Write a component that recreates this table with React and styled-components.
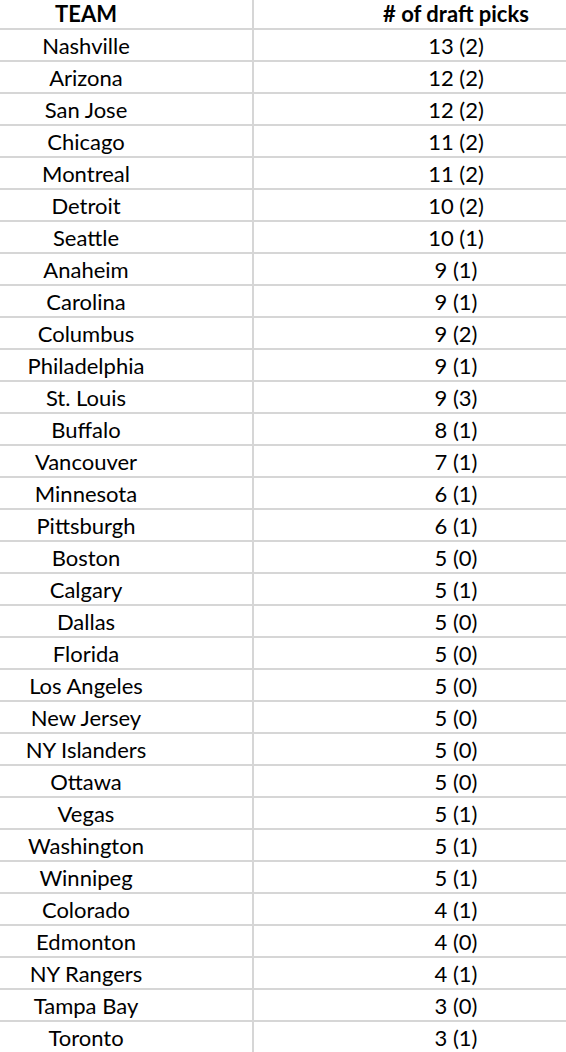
import React from 'react';
import styled, { createGlobalStyle } from 'styled-components';

const rows = [
  ['Nashville', '13 (2)'],
  ['Arizona', '12 (2)'],
  ['San Jose', '12 (2)'],
  ['Chicago', '11 (2)'],
  ['Montreal', '11 (2)'],
  ['Detroit', '10 (2)'],
  ['Seattle', '10 (1)'],
  ['Anaheim', '9 (1)'],
  ['Carolina', '9 (1)'],
  ['Columbus', '9 (2)'],
  ['Philadelphia', '9 (1)'],
  ['St. Louis', '9 (3)'],
  ['Buffalo', '8 (1)'],
  ['Vancouver', '7 (1)'],
  ['Minnesota', '6 (1)'],
  ['Pittsburgh', '6 (1)'],
  ['Boston', '5 (0)'],
  ['Calgary', '5 (1)'],
  ['Dallas', '5 (0)'],
  ['Florida', '5 (0)'],
  ['Los Angeles', '5 (0)'],
  ['New Jersey', '5 (0)'],
  ['NY Islanders', '5 (0)'],
  ['Ottawa', '5 (0)'],
  ['Vegas', '5 (1)'],
  ['Washington', '5 (1)'],
  ['Winnipeg', '5 (1)'],
  ['Colorado', '4 (1)'],
  ['Edmonton', '4 (0)'],
  ['NY Rangers', '4 (1)'],
  ['Tampa Bay', '3 (0)'],
  ['Toronto', '3 (1)'],
];

const GlobalStyle = createGlobalStyle`
  body {
    margin: 0;
    background: #fff;
    font-family: Lato, "Open Sans", sans-serif;
    color: #000;
  }
`;

// gap + gray background draws the sheet grid lines
const Sheet = styled.div`
  display: grid;
  grid-template-columns: 252px 312px;
  grid-template-rows: 28px;
  grid-auto-rows: 30px;
  gap: 2px;
  background: #d6d6d6;
  width: 566px;
  height: 1052px;
`;

const Cell = styled.div`
  background: #fff;
  display: flex;
  align-items: center;
  justify-content: center;
  font-size: 22px;
  font-weight: ${p => (p.$head ? 700 : 400)};
  padding: ${p => (p.$right ? '0 0 0 92px' : '0 80px 0 0')};
  padding-top: ${p => (p.$head ? '0' : '2px')};
  white-space: nowrap;
  line-height: 1;
`;

export default function App() {
  return (
    <>
      <GlobalStyle />
      <Sheet>
        <Cell $head>TEAM</Cell>
        <Cell $head $right># of draft picks</Cell>
        {rows.map(([team, picks]) => (
          <React.Fragment key={team}>
            <Cell>{team}</Cell>
            <Cell $right>{picks}</Cell>
          </React.Fragment>
        ))}
      </Sheet>
    </>
  );
}
